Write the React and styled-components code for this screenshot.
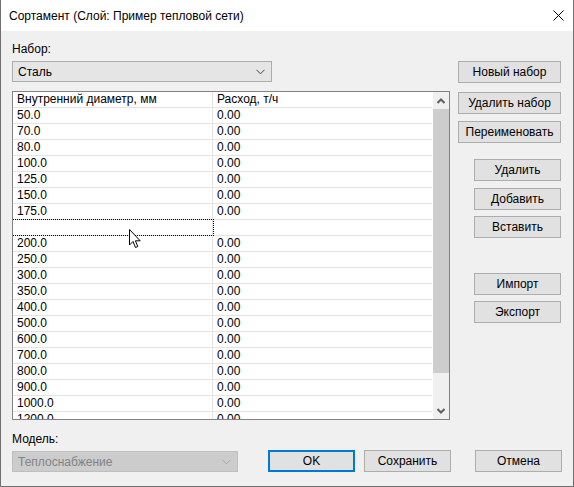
import React from "react";
import styled, { createGlobalStyle } from "styled-components";

const GlobalStyle = createGlobalStyle`
  html, body {
    margin: 0;
    padding: 0;
    background: #f0f0f0;
  }
  body {
    font-family: "Liberation Sans", Arial, sans-serif;
    font-size: 12px;
    color: #000;
  }
`;

const Window = styled.div`
  width: 574px;
  height: 487px;
  box-sizing: border-box;
  border: 1px solid #707070;
  border-top: none;
  display: flex;
  flex-direction: column;
  background: #f0f0f0;
`;

const TitleBar = styled.div`
  height: 31px;
  flex: none;
  background: #fff;
  display: flex;
  align-items: center;
  justify-content: space-between;
  padding: 0 9px 0 8px;
  font-size: 12px;
`;

const Body = styled.div`
  flex: 1;
  padding: 11px 11px 0 11px;
  display: flex;
  flex-direction: column;
`;

const Main = styled.div`
  display: flex;
`;

const LeftColumn = styled.div`
  width: 438px;
  display: flex;
  flex-direction: column;
`;

const RightColumn = styled.div`
  margin-left: 8px;
  width: 103px;
  padding-top: 19px;
  display: flex;
  flex-direction: column;
  align-items: flex-end;
`;

const Label = styled.div`
  height: 14px;
  line-height: 14px;
  color: ${(p) => (p.$muted ? "#000" : "#000")};
`;

const Combo = styled.div`
  margin-top: 5px;
  width: ${(p) => p.$width}px;
  height: 21px;
  box-sizing: border-box;
  border: 1px solid ${(p) => (p.$disabled ? "#bfbfbf" : "#adadad")};
  background: ${(p) => (p.$disabled ? "#cccccc" : "#e5e5e5")};
  color: ${(p) => (p.$disabled ? "#838383" : "#000")};
  display: flex;
  align-items: center;
  justify-content: space-between;
  padding: 0 6px 0 5px;
`;

const Button = styled.div`
  width: ${(p) => (p.$wide ? 103 : 87)}px;
  height: 22px;
  margin-top: ${(p) => p.$mt || 0}px;
  margin-left: ${(p) => p.$ml || 0}px;
  box-sizing: border-box;
  border: ${(p) => (p.$default ? "2px solid #0078d7" : "1px solid #adadad")};
  background: #e1e1e1;
  display: flex;
  align-items: center;
  justify-content: center;
  flex: none;
`;

const Table = styled.div`
  margin-top: 9px;
  height: 329px;
  box-sizing: border-box;
  border: 1px solid #828282;
  background: #fff;
  display: flex;
  position: relative;
`;

const Grid = styled.div`
  flex: 1;
  overflow: hidden;
`;

const Row = styled.div`
  display: flex;
  height: 16px;
  box-sizing: border-box;
  border-bottom: 1px solid #e3e3e3;
`;

const Cell = styled.div`
  box-sizing: border-box;
  height: 15px;
  line-height: 15px;
  padding-left: 4px;
  white-space: nowrap;
  ${(p) => (p.$first ? "width: 200px; border-right: 1px solid #e3e3e3;" : "flex: 1;")}
  ${(p) => (p.$focus ? "outline: 1px dotted #000; outline-offset: 0px;" : "")}
`;

const Scrollbar = styled.div`
  width: 16px;
  flex: none;
  background: #f0f0f0;
  display: flex;
  flex-direction: column;
  margin-left: 1px;
`;

const ScrollArrow = styled.div`
  height: 17px;
  flex: none;
  display: flex;
  align-items: center;
  justify-content: center;
`;

const ScrollTrack = styled.div`
  flex: 1;
  display: flex;
  flex-direction: column;
`;

const Thumb = styled.div`
  height: 264px;
  background: #cdcdcd;
  margin: 0 0 0 0;
`;

const Cursor = styled.svg`
  position: absolute;
  left: 116px;
  top: 137px;
  pointer-events: none;
`;

const Footer = styled.div`
  margin-top: 12px;
  display: flex;
  align-items: flex-end;
`;

const ModelGroup = styled.div`
  display: flex;
  flex-direction: column;
`;

const Chevron = ({ color = "#555", w = 9, down = true }) => (
  <svg width={w} height="6" viewBox="0 0 9 6">
    <polyline
      points={down ? "0.5,0.8 4.5,4.8 8.5,0.8" : "0.5,5 4.5,1 8.5,5"}
      fill="none"
      stroke={color}
      strokeWidth="1"
    />
  </svg>
);

const ScrollChevron = ({ down }) => (
  <svg width="8" height="6" viewBox="0 0 8 6">
    <polyline
      points={down ? "0.5,1 4,4.5 7.5,1" : "0.5,5 4,1.5 7.5,5"}
      fill="none"
      stroke="#606060"
      strokeWidth="2"
    />
  </svg>
);

const rows = [
  "50.0", "70.0", "80.0", "100.0", "125.0", "150.0", "175.0", null,
  "200.0", "250.0", "300.0", "350.0", "400.0", "500.0", "600.0", "700.0",
  "800.0", "900.0", "1000.0", "1200.0",
];

export default function App() {
  return (
    <>
      <GlobalStyle />
      <Window>
        <TitleBar>
          <span>Сортамент (Слой: Пример тепловой сети)</span>
          <svg width="11" height="11" viewBox="0 0 11 11">
            <path d="M0.5 0.5 L10.5 10.5 M10.5 0.5 L0.5 10.5" stroke="#000" strokeWidth="1" />
          </svg>
        </TitleBar>
        <Body>
          <Main>
            <LeftColumn>
              <Label>Набор:</Label>
              <Combo $width={260}>
                <span>Сталь</span>
                <Chevron color="#444" />
              </Combo>
              <Table>
                <Grid>
                  <Row>
                    <Cell $first>Внутренний диаметр, мм</Cell>
                    <Cell>Расход, т/ч</Cell>
                  </Row>
                  {rows.map((r, i) => (
                    <Row key={i}>
                      <Cell $first $focus={r === null}>{r}</Cell>
                      <Cell>{r === null ? "" : "0.00"}</Cell>
                    </Row>
                  ))}
                </Grid>
                <Scrollbar>
                  <ScrollArrow>
                    <ScrollChevron />
                  </ScrollArrow>
                  <ScrollTrack>
                    <Thumb />
                  </ScrollTrack>
                  <ScrollArrow>
                    <ScrollChevron down />
                  </ScrollArrow>
                </Scrollbar>
                <Cursor width="13" height="20" viewBox="0 0 13 20">
                  <path
                    d="M0.5 0.5 L0.5 16 L4 12.5 L6.5 18.5 L8.8 17.5 L6.4 11.8 L11.2 11.8 Z"
                    fill="#fff"
                    stroke="#000"
                    strokeWidth="1"
                    strokeLinejoin="miter"
                  />
                </Cursor>
              </Table>
            </LeftColumn>
            <RightColumn>
              <Button $wide>Новый набор</Button>
              <Button $wide $mt={9}>Удалить набор</Button>
              <Button $wide $mt={7}>Переименовать</Button>
              <Button $mt={16}>Удалить</Button>
              <Button $mt={7}>Добавить</Button>
              <Button $mt={6}>Вставить</Button>
              <Button $mt={35}>Импорт</Button>
              <Button $mt={6}>Экспорт</Button>
            </RightColumn>
          </Main>
          <Footer>
            <ModelGroup>
              <Label>Модель:</Label>
              <Combo $width={226} $disabled>
                <span>Теплоснабжение</span>
                <Chevron color="#a8a8a8" />
              </Combo>
            </ModelGroup>
            <Button $default $ml={30}>OK</Button>
            <Button $ml={9}>Сохранить</Button>
            <Button $ml={24}>Отмена</Button>
          </Footer>
        </Body>
      </Window>
    </>
  );
}
